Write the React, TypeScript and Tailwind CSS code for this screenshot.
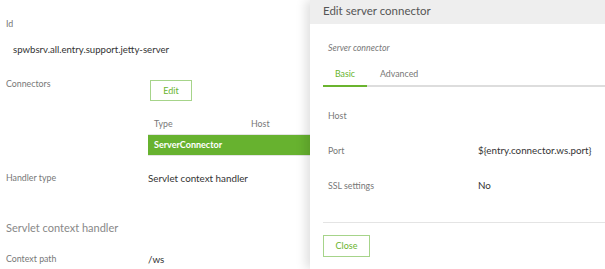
import React from 'react';

const font = { fontFamily: 'Lato, "Noto Sans", sans-serif' };

function Row({ label, value, className = '' }: { label: string; value?: React.ReactNode; className?: string }) {
  return (
    <div className={`flex items-center ${className}`}>
      <div className="w-[142px] text-[8.8px] text-[#777]">{label}</div>
      <div className="text-[9.8px] text-[#333]">{value}</div>
    </div>
  );
}

function DrawerRow({ label, value }: { label: string; value?: string }) {
  return (
    <div className="flex items-center h-[35px]">
      <div className="w-[150px] text-[8.8px] text-[#777]">{label}</div>
      <div className="text-[9.8px] text-[#333]">{value}</div>
    </div>
  );
}

export default function App() {
  return (
    <div className="relative w-[605px] h-[269px] overflow-hidden bg-white" style={font}>
      {/* page behind the drawer */}
      <div className="pl-[6px]">
        <div className="pt-[18px] text-[8.8px] text-[#777] leading-[12px]">Id</div>
        <div className="pl-[7px] pt-[13px] text-[9.6px] text-[#333] leading-[13px]">spwbsrv.all.entry.support.jetty-server</div>

        <div className="flex mt-[22px]">
          <div className="w-[142px] text-[8.8px] text-[#777] leading-[12px]">Connectors</div>
          <div className="flex-1 pt-[2px]">
            <button className="block w-[42px] h-[21px] border border-[#a6d48a] text-[#6ab42e] text-[9px] ml-[2px]">Edit</button>
            <div className="mt-[12px] w-[200px]">
              <div className="flex h-[22px] items-center border-b border-[#e4e4e4] text-[8.8px] text-[#777]">
                <div className="w-[103px] pl-[6px]">Type</div>
                <div>Host</div>
              </div>
              <div className="flex h-[21px] items-center bg-[#67b22f] text-white text-[9px] font-bold border-b border-[#e4e4e4]">
                <div className="pl-[6px]">ServerConnector</div>
              </div>
            </div>
          </div>
        </div>

        <Row label="Handler type" value="Servlet context handler" className="h-[22px] mt-[11px]" />

        <div className="mt-[31px] text-[11px] text-[#888] leading-[16px]">Servlet context handler</div>
        <Row label="Context path" value="/ws" className="h-[14px] mt-[16px]" />
      </div>

      {/* drawer */}
      <div className="absolute top-0 right-0 bottom-0 w-[295px] bg-white shadow-[-4px_0_10px_rgba(0,0,0,0.13)]">
        <div className="h-[24px] bg-[#eeeeee] pl-[13px] pb-[3px] flex items-center text-[11.5px] text-[#555]">Edit server connector</div>
        <div className="pl-[13px]">
          <div className="pl-[5px] pt-[18px] text-[8.8px] italic text-[#777] leading-[12px]">Server connector</div>
          <div className="mt-[13px] flex border-b-2 border-[#dddddd] h-[20px]">
            <div className="w-[44px] -mb-[2px] border-b-2 border-[#6ab42e] text-center text-[8.8px] text-[#6ab42e] leading-[14px]">Basic</div>
            <div className="ml-[13px] text-[8.8px] text-[#777] leading-[14px]">Advanced</div>
          </div>
          <div className="pl-[5px] mt-[11px]">
            <DrawerRow label="Host" />
            <DrawerRow label="Port" value="${entry.connector.ws.port}" />
            <DrawerRow label="SSL settings" value="No" />
          </div>
          <div className="mt-[19px] border-t border-[#e4e4e4]" />
          <button className="block mt-[12px] w-[47px] h-[22px] border border-[#a6d48a] text-[#6ab42e] text-[9px]">Close</button>
        </div>
      </div>
    </div>
  );
}
